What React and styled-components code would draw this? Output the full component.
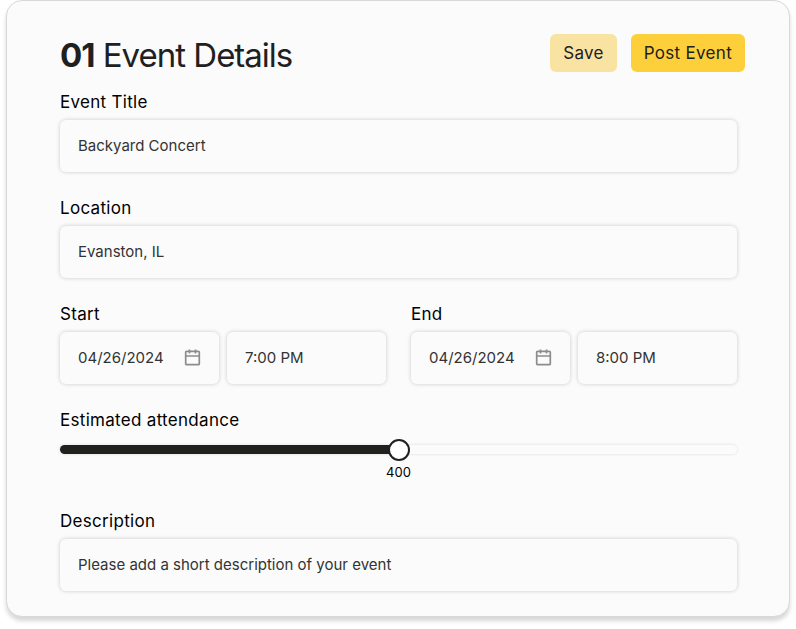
import React, { useState } from "react";
import styled, { createGlobalStyle } from "styled-components";

const GlobalStyle = createGlobalStyle`
  *, *::before, *::after { box-sizing: border-box; }
  body {
    margin: 0;
    background: #fff;
    color: #000;
    font-family: Inter, "Liberation Sans", sans-serif;
  }
  button, input, output { font-family: inherit; }
`;

const Card = styled.main`
  margin: 0 6px 12px;
  padding: 33px 52px 25px 53px;
  background: #fbfbfb;
  border: 1px solid #d9d9d9;
  border-radius: 16px;
  box-shadow: 0 4px 4px rgba(0, 0, 0, 0.16);
`;

const Header = styled.header`
  display: flex;
  align-items: flex-start;
  justify-content: space-between;
  margin-right: -8px;
`;

const Title = styled.h1`
  margin: 0;
  color: #20201e;
  font-size: 33px;
  line-height: 42px;
  font-weight: 400;
  letter-spacing: -1px;
`;

const Step = styled.strong`
  font-weight: 700;
`;

const Actions = styled.div`
  display: flex;
  gap: 14px;
`;

const Button = styled.button`
  height: 38px;
  padding: 0 13px;
  border: 0;
  border-radius: 6px;
  background: ${({ $primary }) => ($primary ? "#fdd03b" : "#f8e3a2")};
  color: #20201e;
  font-size: 17px;
  line-height: 24px;
  letter-spacing: 0.3px;
  cursor: pointer;
`;

const Form = styled.form`
  display: flex;
  flex-direction: column;
  gap: 24px;
  margin-top: 14px;
`;

const Field = styled.div`
  display: flex;
  flex-direction: column;
  gap: 6px;
  min-width: 0;
`;

const Label = styled.label`
  font-size: 17px;
  line-height: 24px;
  letter-spacing: 0.3px;
`;

const InputBox = styled.div`
  display: flex;
  align-items: center;
  height: 52px;
  min-width: 0;
  padding: 0 18px;
  border-radius: 6px;
  background: #fbfbfb;
  box-shadow: 0 0 4px rgba(0, 0, 0, 0.2);
`;

const TextInput = styled.input`
  flex: 1;
  width: 100%;
  min-width: 0;
  padding: 0;
  border: 0;
  outline: 0;
  background: transparent;
  color: #333;
  font-size: 15px;
  line-height: 20px;

  &::placeholder {
    color: #333;
    opacity: 1;
  }
`;

const DateButton = styled.button`
  display: flex;
  padding: 0;
  border: 0;
  background: transparent;
  color: #8c8c8c;
  cursor: pointer;
`;

const Columns = styled.div`
  display: grid;
  grid-template-columns: 1fr 1fr;
  gap: 25px;
`;

const Pair = styled.div`
  display: grid;
  grid-template-columns: 1fr 1fr;
  gap: 8px;
`;

const SliderWrap = styled.div`
  position: relative;
  padding-bottom: 25px;
`;

const Slider = styled.input`
  display: block;
  width: 100%;
  height: 22px;
  margin: 0;
  appearance: none;
  background: transparent;
  cursor: pointer;

  &::-webkit-slider-runnable-track {
    height: 9px;
    border-radius: 5px;
    background: linear-gradient(to right, #20201e var(--filled), #fbfbfb var(--filled));
    box-shadow: 0 0 3px rgba(0, 0, 0, 0.14);
  }

  &::-webkit-slider-thumb {
    appearance: none;
    width: 22px;
    height: 22px;
    margin-top: -6px;
    border: 2px solid #20201e;
    border-radius: 50%;
    background: #fff;
  }
`;

const SliderValue = styled.output`
  position: absolute;
  top: 25px;
  transform: translateX(-50%);
  font-size: 13px;
  line-height: 18px;
`;

function CalendarIcon() {
  return (
    <svg width="17" height="18" viewBox="0 0 17 18" fill="none" stroke="currentColor" strokeWidth="1.7" strokeLinejoin="round" aria-hidden="true">
      <rect x="1.7" y="2.3" width="13.6" height="13.4" rx="1" />
      <path d="M1.7 7h13.6M5.5 0.4v4M11.5 0.4v4" />
    </svg>
  );
}

function TextField({ id, label, ...input }) {
  return (
    <Field>
      <Label htmlFor={id}>{label}</Label>
      <InputBox>
        <TextInput id={id} type="text" {...input} />
      </InputBox>
    </Field>
  );
}

function DateTimeField({ id, label, date, time }) {
  return (
    <Field>
      <Label htmlFor={id}>{label}</Label>
      <Pair>
        <InputBox>
          <TextInput id={id} type="text" defaultValue={date} />
          <DateButton type="button" aria-label={`Choose ${label.toLowerCase()} date`}>
            <CalendarIcon />
          </DateButton>
        </InputBox>
        <InputBox>
          <TextInput type="text" aria-label={`${label} time`} defaultValue={time} />
        </InputBox>
      </Pair>
    </Field>
  );
}

function AttendanceField() {
  const [value, setValue] = useState(400);
  const filled = `${(value / 800) * 100}%`;
  return (
    <Field>
      <Label htmlFor="attendance">Estimated attendance</Label>
      <SliderWrap>
        <Slider
          id="attendance"
          type="range"
          min="0"
          max="800"
          value={value}
          onChange={(e) => setValue(Number(e.target.value))}
          style={{ "--filled": filled }}
        />
        <SliderValue htmlFor="attendance" style={{ left: filled }}>{value}</SliderValue>
      </SliderWrap>
    </Field>
  );
}

export default function App() {
  return (
    <>
      <GlobalStyle />
      <Card>
        <Header>
          <Title><Step>01</Step> Event Details</Title>
          <Actions>
            <Button type="submit" form="event-form">Save</Button>
            <Button type="submit" form="event-form" $primary>Post Event</Button>
          </Actions>
        </Header>
        <Form id="event-form" onSubmit={(e) => e.preventDefault()}>
          <TextField id="title" label="Event Title" defaultValue="Backyard Concert" />
          <TextField id="location" label="Location" defaultValue="Evanston, IL" />
          <Columns>
            <DateTimeField id="start" label="Start" date="04/26/2024" time="7:00 PM" />
            <DateTimeField id="end" label="End" date="04/26/2024" time="8:00 PM" />
          </Columns>
          <AttendanceField />
          <TextField id="description" label="Description" placeholder="Please add a short description of your event" />
        </Form>
      </Card>
    </>
  );
}
